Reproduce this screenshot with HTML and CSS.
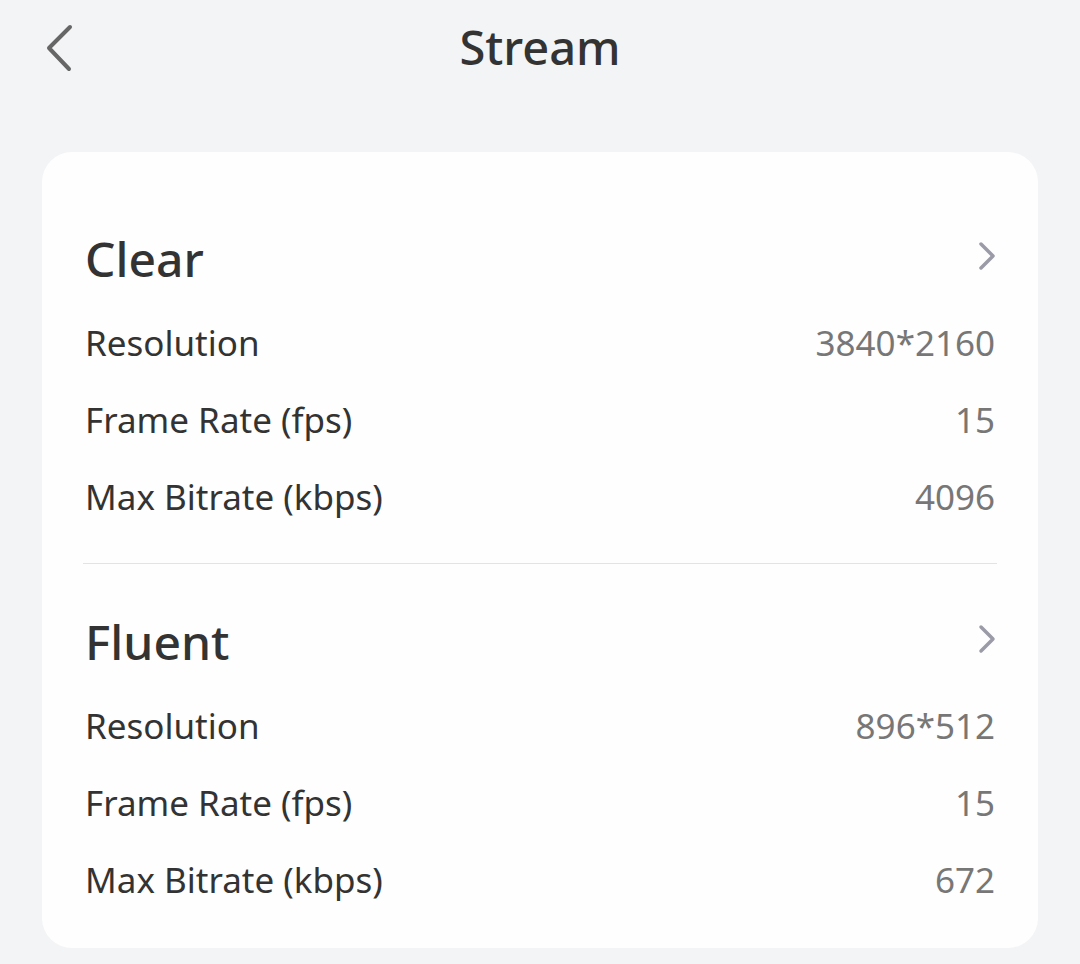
FILE: index.html
```html
<!DOCTYPE html>
<html>
<head>
<meta charset="utf-8">
<link rel="stylesheet" href="styles.css">
</head>
<body>
<div class="header">
  <div class="back">
    <svg width="40" height="60" viewBox="0 0 40 60"><path d="M24 15 L3 36 L23 57" fill="none" stroke="#666" stroke-width="4" stroke-linecap="round" stroke-linejoin="round"/></svg>
  </div>
  <div class="title">Stream</div>
  <div></div>
</div>
<div class="card">
  <div class="section">
    <div class="head"><span>Clear</span>
      <svg class="chev" width="24" height="40" viewBox="0 0 24 40"><path d="M8 6 L20 18 L8 30" fill="none" stroke="#9b9ba8" stroke-width="3.5" stroke-linecap="round" stroke-linejoin="round"/></svg>
    </div>
    <div class="row"><span class="label">Resolution</span><span class="value">3840*2160</span></div>
    <div class="row"><span class="label">Frame Rate (fps)</span><span class="value">15</span></div>
    <div class="row"><span class="label">Max Bitrate (kbps)</span><span class="value">4096</span></div>
  </div>
  <div class="divider"></div>
  <div class="section">
    <div class="head"><span>Fluent</span>
      <svg class="chev" width="24" height="40" viewBox="0 0 24 40"><path d="M8 6 L20 18 L8 30" fill="none" stroke="#9b9ba8" stroke-width="3.5" stroke-linecap="round" stroke-linejoin="round"/></svg>
    </div>
    <div class="row"><span class="label">Resolution</span><span class="value">896*512</span></div>
    <div class="row"><span class="label">Frame Rate (fps)</span><span class="value">15</span></div>
    <div class="row"><span class="label">Max Bitrate (kbps)</span><span class="value">672</span></div>
  </div>
</div>
</body>
</html>
```
FILE: styles.css
```css
html, body {
  margin: 0;
  padding: 0;
  background: #f3f4f6;
  font-family: "Noto Sans", "Open Sans", sans-serif;
  color: #333;
}
.header {
  display: grid;
  grid-template-columns: 1fr auto 1fr;
  align-items: center;
  height: 95px;
}
.back {
  padding-left: 46px;
  display: flex;
  align-items: center;
  height: 95px;
  box-sizing: border-box;
  padding-bottom: 12px;
}
.title {
  font-size: 47px;
  font-weight: 500;
  line-height: 93px;
  color: #333;
}
.card {
  margin: 57px 42px 0 42px;
  background: #fefefe;
  border-radius: 30px;
  padding: 29px 0 2px 0;
}
.section {
  padding: 31px 43px 28px 43px;
}
.head {
  display: flex;
  justify-content: space-between;
  align-items: center;
  height: 92px;
  font-size: 48px;
  font-weight: 500;
  color: #333;
}
.chev {
  margin-right: -2px;
}
.row {
  display: flex;
  justify-content: space-between;
  align-items: center;
  height: 77px;
  font-size: 35px;
}
.label {
  color: #333;
}
.value {
  color: #777;
}
.divider {
  height: 1px;
  background: #e3e3e3;
  margin: 0 41px;
}
```
